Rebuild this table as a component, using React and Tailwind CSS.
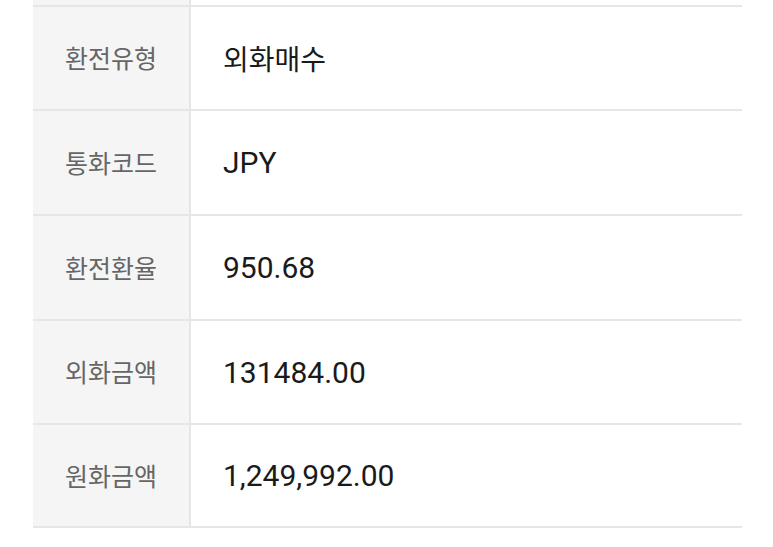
const rows = [
  { label: '환전유형', value: '외화매수', kr: true, h: 'h-[104px]' },
  { label: '통화코드', value: 'JPY', h: 'h-[105px]' },
  { label: '환전환율', value: '950.68', h: 'h-[105px]' },
  { label: '외화금액', value: '131484.00', h: 'h-[104px]' },
  { label: '원화금액', value: '1,249,992.00', h: 'h-[105px]', last: true },
]

function Row({ label, value, kr, h, last }) {
  return (
    <div className={`flex border-t-2 border-[#e6e6e6] ${h} ${last ? 'border-b-2' : ''}`}>
      <div className="w-[158px] shrink-0 flex items-center justify-center bg-[#f5f5f5] border-r-2 border-[#e6e6e6]">
        <span className="text-[25px] text-[#666666] font-['Noto_Sans_CJK_KR',sans-serif]">{label}</span>
      </div>
      <div className="flex-1 flex items-center pl-[32px]">
        <span
          className={
            kr
              ? "text-[28px] text-[#1a1a1a] font-['Noto_Sans_CJK_KR',sans-serif]"
              : "text-[30px] text-[#1a1a1a] font-['Roboto','Noto_Sans_CJK_KR',sans-serif]"
          }
        >
          {value}
        </span>
      </div>
    </div>
  )
}

export default function App() {
  return (
    <div className="w-[773px] h-[547px] bg-white overflow-hidden">
      <div className="ml-[33px] w-[709px]">
        <div className="flex h-[5px]">
          <div className="w-[158px] bg-[#f5f5f5] border-r-2 border-[#e6e6e6]" />
        </div>
        {rows.map((r) => (
          <Row key={r.label} {...r} />
        ))}
      </div>
    </div>
  )
}
